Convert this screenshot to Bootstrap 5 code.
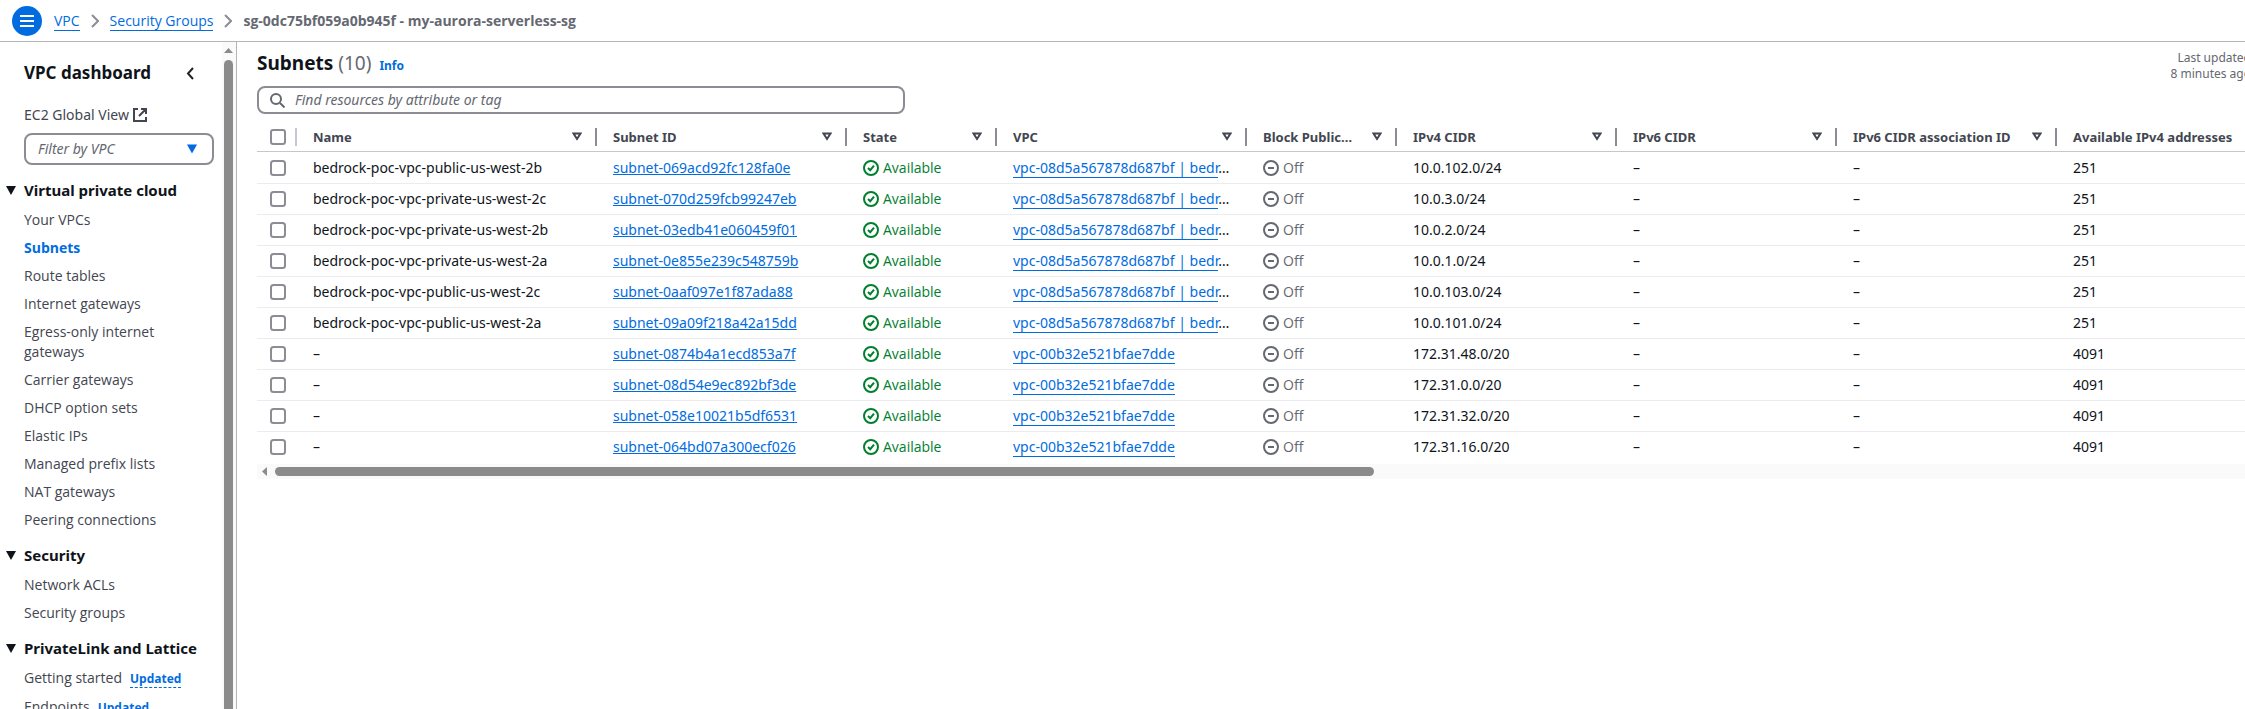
<!DOCTYPE html>
<html lang="en">
<head>
<meta charset="utf-8">
<meta name="viewport" content="width=device-width, initial-scale=1">
<title>Subnets | VPC dashboard</title>
<link href="https://cdn.jsdelivr.net/npm/bootstrap@5.3.0/dist/css/bootstrap.min.css" rel="stylesheet">
<style>
  :root { --ink: #0f141a; --muted: #656871; --body: #424650; --blue: #006ce0; --line: #8c8c94; }
  body { font-family: "Noto Sans", "Open Sans", sans-serif; font-size: 14px; line-height: 20px; color: var(--ink); background: #fff; }
  svg { flex: none; fill: none; stroke: currentColor; stroke-width: 2; }
  .solid { fill: currentColor; stroke: none; }
  a { color: var(--blue); }
  .shell { height: 100vh; }
  .topbar { height: 42px; border-bottom: 1px solid #b4b4bb; padding-left: 12px; }
  .menu-btn { width: 30px; height: 30px; background: var(--blue); color: #fff; }
  .crumbs { font-family: "Open Sans", "Noto Sans", sans-serif; gap: 11px; margin-left: 12px; color: var(--line); }
  .crumbs a, .vpc-link { text-decoration: none; border-bottom: 1px solid var(--blue); }
  .crumbs .here { color: var(--muted); font-weight: 700; }
  .side { width: 237px; border-right: 1px solid #b4b4bb; }
  .side-body { min-width: 0; padding: 19px 8px 0 24px; }
  .side h1 { font-size: 17px; line-height: 24px; font-weight: 700; }
  .side .collapse-btn { margin-right: 20px; }
  .side h2 { font-size: 15px; line-height: 20px; font-weight: 700; margin: 0 0 10px -18px; gap: 8px; }
  .side a { color: var(--body); text-decoration: none; }
  .side .current { color: var(--blue); font-weight: 700; }
  .side ul { font-family: "Open Sans", "Noto Sans", sans-serif; gap: 8px; margin-bottom: 15px; }
  .side li { padding-right: 40px; }
  .side .tagged { padding: 0; white-space: nowrap; }
  .side .updated { color: var(--blue); font-size: 12px; font-weight: 700; border-bottom: 1px dashed var(--blue); margin-left: 8px; }
  .vpc-filter { height: 32px; border: 2px solid var(--line); border-radius: 8px; font-size: 14px; font-style: italic; color: var(--muted); padding: 0 12px; appearance: none; background: #fff; }
  .filter-wrap { margin: 8px 0 15px; width: 190px; }
  .filter-wrap svg { right: 17px; top: 11px; color: var(--blue); pointer-events: none; }
  .vbar { flex: none; width: 14px; background: #fafafa; color: #8b8b8b; padding: 6px 2px 0 0; gap: 7px; }
  .vbar .thumb { width: 9px; background: #8b8b8b; border-radius: 5px 5px 0 0; }
  .content { padding: 8px 0 0 20px; min-width: 0; }
  .content h2 { font-size: 19px; line-height: 26px; font-weight: 700; }
  .content .count { color: var(--muted); font-weight: 400; }
  .info { font-size: 12px; font-weight: 700; text-decoration: none; margin-left: 8px; }
  .stamp { font-size: 12px; line-height: 16px; color: var(--muted); margin-right: -6px; }
  .finder { width: 648px; height: 28px; border: 2px solid var(--line); border-radius: 8px; padding: 0 11px; gap: 10px; color: var(--muted); }
  .finder input { font-style: italic; line-height: 20px; color: var(--muted); }
  .finder input::placeholder { color: var(--muted); opacity: 1; }
  .grid-wrap { margin: 8px 0 1px; }
  .subnets { table-layout: fixed; width: 2020px; border-collapse: separate; border-spacing: 0; margin: 0; }
  .subnets th, .subnets td { padding: 0 16px; height: 31px; white-space: nowrap; vertical-align: middle; border-bottom: 1px solid #ebebf0; }
  .subnets th { height: 30px; font-size: 13px; color: var(--body); font-weight: 700; border-bottom-color: #c6c6cd; }
  .subnets tr:first-child td { height: 32px; }
  .subnets tr:last-child td { border-bottom-color: transparent; }
  .subnets td:first-child, .subnets th:first-child { padding: 0 0 0 13px; }
  .subnets .head { height: 18px; border-right: 2px solid var(--line); margin: 0 -16px 0 0; padding-right: 13px; }
  .subnets .head.light { border-color: #c6c6cd; margin: 0; padding: 0; }
  .subnets .head.last { border: 0; }
  .subnets input { flex: none; width: 16px; height: 16px; margin: 0; border: 2px solid var(--line); border-radius: 3px; }
  .status { gap: 4px; font-family: "Open Sans", "Noto Sans", sans-serif; }
  .ok { color: #00802f; }
  .off { color: var(--muted); }
  .hbar { height: 15px; background: #fafafa; color: #8b8b8b; padding-left: 5px; gap: 8px; }
  .hbar .thumb { width: 55.4%; height: 9px; border-radius: 5px; background: #8b8b8b; }
</style>
</head>
<body>
<svg width="0" height="0" class="position-absolute" aria-hidden="true">
  <symbol id="ok" viewBox="0 0 16 16"><circle cx="8" cy="8" r="7"/><path d="M5 8l2.200 2.200L11 5.600"/></symbol>
  <symbol id="off" viewBox="0 0 16 16"><circle cx="8" cy="8" r="7"/><path d="M5 8h6"/></symbol>
  <symbol id="sort" viewBox="0 0 10 9"><path d="M1.500 1.500h7L5 7z"/></symbol>
  <symbol id="chev" viewBox="0 0 8 14"><path d="M1 1l6 6-6 6"/></symbol>
  <symbol id="tri" viewBox="0 0 10 9"><path d="M0 0h10L5 9z" fill="currentColor" stroke="none"/></symbol>
</svg>
<div class="shell d-flex flex-column overflow-hidden">
  <header class="topbar d-flex align-items-center flex-shrink-0">
    <button type="button" class="menu-btn btn rounded-circle p-0 border-0 d-flex align-items-center justify-content-center" aria-label="Menu"><svg width="14" height="12" viewBox="0 0 14 12"><path d="M0 1h14M0 6h14M0 11h14"/></svg></button>
    <nav aria-label="Breadcrumb">
      <ol class="crumbs list-unstyled d-flex align-items-center mb-0">
        <li><a href="#">VPC</a></li>
        <li class="d-flex"><svg width="8" height="14"><use href="#chev"/></svg></li>
        <li><a href="#">Security Groups</a></li>
        <li class="d-flex"><svg width="8" height="14"><use href="#chev"/></svg></li>
        <li class="here">sg-0dc75bf059a0b945f - my-aurora-serverless-sg</li>
      </ol>
    </nav>
  </header>
  <div class="d-flex flex-grow-1 overflow-hidden">
    <aside class="side d-flex flex-shrink-0">
      <div class="side-body flex-grow-1">
        <div class="d-flex justify-content-between align-items-center mb-3 pb-1">
          <h1 class="mb-0">VPC dashboard</h1>
          <button type="button" class="collapse-btn btn p-0 border-0 d-flex" aria-label="Collapse"><svg width="8" height="13" viewBox="0 0 8 13"><path d="M7 1L2 6.500l5 5.500"/></svg></button>
        </div>
        <a href="#" class="d-flex align-items-center gap-1">EC2 Global View <svg width="14" height="14" viewBox="0 0 14 14"><path d="M5 1H1v12h12V9M8 1h5v5M13 1L6 8"/></svg></a>
        <div class="filter-wrap position-relative">
          <select class="vpc-filter w-100" aria-label="Filter by VPC"><option>Filter by VPC</option></select>
          <svg class="position-absolute" width="10" height="10"><use href="#tri"/></svg>
        </div>
        <h2 class="d-flex align-items-center"><svg width="10" height="9"><use href="#tri"/></svg>Virtual private cloud</h2>
        <ul class="list-unstyled d-flex flex-column">
          <li><a href="#">Your VPCs</a></li>
          <li><a href="#" class="current">Subnets</a></li>
          <li><a href="#">Route tables</a></li>
          <li><a href="#">Internet gateways</a></li>
          <li><a href="#">Egress-only internet gateways</a></li>
          <li><a href="#">Carrier gateways</a></li>
          <li><a href="#">DHCP option sets</a></li>
          <li><a href="#">Elastic IPs</a></li>
          <li><a href="#">Managed prefix lists</a></li>
          <li><a href="#">NAT gateways</a></li>
          <li><a href="#">Peering connections</a></li>
        </ul>
        <h2 class="d-flex align-items-center"><svg width="10" height="9"><use href="#tri"/></svg>Security</h2>
        <ul class="list-unstyled d-flex flex-column">
          <li><a href="#">Network ACLs</a></li>
          <li><a href="#">Security groups</a></li>
        </ul>
        <h2 class="d-flex align-items-center"><svg width="10" height="9"><use href="#tri"/></svg>PrivateLink and Lattice</h2>
        <ul class="list-unstyled d-flex flex-column">
          <li class="tagged"><a href="#">Getting started</a><a href="#" class="updated">Updated</a></li>
          <li class="tagged"><a href="#">Endpoints</a><a href="#" class="updated">Updated</a></li>
        </ul>
      </div>
      <div class="vbar d-flex flex-column align-items-center" aria-hidden="true">
        <svg width="9" height="5" viewBox="0 0 9 5"><path class="solid" d="M0 5L4.500 0 9 5z"/></svg>
        <div class="thumb flex-grow-1"></div>
      </div>
    </aside>
    <main class="content flex-grow-1 overflow-hidden">
      <div class="d-flex justify-content-between">
        <div class="d-flex align-items-baseline">
          <h2 class="mb-0">Subnets <span class="count">(10)</span></h2>
          <a href="#" class="info">Info</a>
        </div>
        <div class="stamp text-end">Last updated<br>8 minutes ago</div>
      </div>
      <label class="finder d-flex align-items-center mt-1">
        <svg width="15" height="15" viewBox="0 0 15 15"><circle cx="6" cy="6" r="5"/><path d="M10 10l4.500 4.500"/></svg>
        <input type="search" class="border-0 p-0 flex-grow-1 bg-transparent" placeholder="Find resources by attribute or tag" aria-label="Find resources">
      </label>
      <div class="grid-wrap overflow-hidden">
        <table class="subnets">
          <colgroup><col style="width:40px"><col style="width:300px"><col style="width:250px"><col style="width:150px"><col style="width:250px"><col style="width:150px"><col style="width:220px"><col style="width:220px"><col style="width:220px"><col></colgroup>
          <thead><tr>
            <th><div class="head light d-flex align-items-center"><input class="form-check-input" type="checkbox" aria-label="Select all"></div></th>
            <th><div class="head d-flex align-items-center justify-content-between">Name<svg width="10" height="9"><use href="#sort"/></svg></div></th>
            <th><div class="head d-flex align-items-center justify-content-between">Subnet ID<svg width="10" height="9"><use href="#sort"/></svg></div></th>
            <th><div class="head d-flex align-items-center justify-content-between">State<svg width="10" height="9"><use href="#sort"/></svg></div></th>
            <th><div class="head d-flex align-items-center justify-content-between">VPC<svg width="10" height="9"><use href="#sort"/></svg></div></th>
            <th><div class="head d-flex align-items-center justify-content-between">Block Public…<svg width="10" height="9"><use href="#sort"/></svg></div></th>
            <th><div class="head d-flex align-items-center justify-content-between">IPv4 CIDR<svg width="10" height="9"><use href="#sort"/></svg></div></th>
            <th><div class="head d-flex align-items-center justify-content-between">IPv6 CIDR<svg width="10" height="9"><use href="#sort"/></svg></div></th>
            <th><div class="head d-flex align-items-center justify-content-between">IPv6 CIDR association ID<svg width="10" height="9"><use href="#sort"/></svg></div></th>
            <th><div class="head last d-flex align-items-center">Available IPv4 addresses</div></th>
          </tr></thead>
          <tbody>
            <tr><td><input class="form-check-input d-block" type="checkbox" aria-label="Select row"></td><td>bedrock-poc-vpc-public-us-west-2b</td><td><a href="#">subnet-069acd92fc128fa0e</a></td><td><span class="status ok d-flex align-items-center"><svg width="16" height="16"><use href="#ok"/></svg>Available</span></td><td><a href="#" class="vpc-link">vpc-08d5a567878d687bf | bedr</a>…</td><td><span class="status off d-flex align-items-center"><svg width="16" height="16"><use href="#off"/></svg>Off</span></td><td>10.0.102.0/24</td><td>–</td><td>–</td><td>251</td></tr>
            <tr><td><input class="form-check-input d-block" type="checkbox" aria-label="Select row"></td><td>bedrock-poc-vpc-private-us-west-2c</td><td><a href="#">subnet-070d259fcb99247eb</a></td><td><span class="status ok d-flex align-items-center"><svg width="16" height="16"><use href="#ok"/></svg>Available</span></td><td><a href="#" class="vpc-link">vpc-08d5a567878d687bf | bedr</a>…</td><td><span class="status off d-flex align-items-center"><svg width="16" height="16"><use href="#off"/></svg>Off</span></td><td>10.0.3.0/24</td><td>–</td><td>–</td><td>251</td></tr>
            <tr><td><input class="form-check-input d-block" type="checkbox" aria-label="Select row"></td><td>bedrock-poc-vpc-private-us-west-2b</td><td><a href="#">subnet-03edb41e060459f01</a></td><td><span class="status ok d-flex align-items-center"><svg width="16" height="16"><use href="#ok"/></svg>Available</span></td><td><a href="#" class="vpc-link">vpc-08d5a567878d687bf | bedr</a>…</td><td><span class="status off d-flex align-items-center"><svg width="16" height="16"><use href="#off"/></svg>Off</span></td><td>10.0.2.0/24</td><td>–</td><td>–</td><td>251</td></tr>
            <tr><td><input class="form-check-input d-block" type="checkbox" aria-label="Select row"></td><td>bedrock-poc-vpc-private-us-west-2a</td><td><a href="#">subnet-0e855e239c548759b</a></td><td><span class="status ok d-flex align-items-center"><svg width="16" height="16"><use href="#ok"/></svg>Available</span></td><td><a href="#" class="vpc-link">vpc-08d5a567878d687bf | bedr</a>…</td><td><span class="status off d-flex align-items-center"><svg width="16" height="16"><use href="#off"/></svg>Off</span></td><td>10.0.1.0/24</td><td>–</td><td>–</td><td>251</td></tr>
            <tr><td><input class="form-check-input d-block" type="checkbox" aria-label="Select row"></td><td>bedrock-poc-vpc-public-us-west-2c</td><td><a href="#">subnet-0aaf097e1f87ada88</a></td><td><span class="status ok d-flex align-items-center"><svg width="16" height="16"><use href="#ok"/></svg>Available</span></td><td><a href="#" class="vpc-link">vpc-08d5a567878d687bf | bedr</a>…</td><td><span class="status off d-flex align-items-center"><svg width="16" height="16"><use href="#off"/></svg>Off</span></td><td>10.0.103.0/24</td><td>–</td><td>–</td><td>251</td></tr>
            <tr><td><input class="form-check-input d-block" type="checkbox" aria-label="Select row"></td><td>bedrock-poc-vpc-public-us-west-2a</td><td><a href="#">subnet-09a09f218a42a15dd</a></td><td><span class="status ok d-flex align-items-center"><svg width="16" height="16"><use href="#ok"/></svg>Available</span></td><td><a href="#" class="vpc-link">vpc-08d5a567878d687bf | bedr</a>…</td><td><span class="status off d-flex align-items-center"><svg width="16" height="16"><use href="#off"/></svg>Off</span></td><td>10.0.101.0/24</td><td>–</td><td>–</td><td>251</td></tr>
            <tr><td><input class="form-check-input d-block" type="checkbox" aria-label="Select row"></td><td>–</td><td><a href="#">subnet-0874b4a1ecd853a7f</a></td><td><span class="status ok d-flex align-items-center"><svg width="16" height="16"><use href="#ok"/></svg>Available</span></td><td><a href="#" class="vpc-link">vpc-00b32e521bfae7dde</a></td><td><span class="status off d-flex align-items-center"><svg width="16" height="16"><use href="#off"/></svg>Off</span></td><td>172.31.48.0/20</td><td>–</td><td>–</td><td>4091</td></tr>
            <tr><td><input class="form-check-input d-block" type="checkbox" aria-label="Select row"></td><td>–</td><td><a href="#">subnet-08d54e9ec892bf3de</a></td><td><span class="status ok d-flex align-items-center"><svg width="16" height="16"><use href="#ok"/></svg>Available</span></td><td><a href="#" class="vpc-link">vpc-00b32e521bfae7dde</a></td><td><span class="status off d-flex align-items-center"><svg width="16" height="16"><use href="#off"/></svg>Off</span></td><td>172.31.0.0/20</td><td>–</td><td>–</td><td>4091</td></tr>
            <tr><td><input class="form-check-input d-block" type="checkbox" aria-label="Select row"></td><td>–</td><td><a href="#">subnet-058e10021b5df6531</a></td><td><span class="status ok d-flex align-items-center"><svg width="16" height="16"><use href="#ok"/></svg>Available</span></td><td><a href="#" class="vpc-link">vpc-00b32e521bfae7dde</a></td><td><span class="status off d-flex align-items-center"><svg width="16" height="16"><use href="#off"/></svg>Off</span></td><td>172.31.32.0/20</td><td>–</td><td>–</td><td>4091</td></tr>
            <tr><td><input class="form-check-input d-block" type="checkbox" aria-label="Select row"></td><td>–</td><td><a href="#">subnet-064bd07a300ecf026</a></td><td><span class="status ok d-flex align-items-center"><svg width="16" height="16"><use href="#ok"/></svg>Available</span></td><td><a href="#" class="vpc-link">vpc-00b32e521bfae7dde</a></td><td><span class="status off d-flex align-items-center"><svg width="16" height="16"><use href="#off"/></svg>Off</span></td><td>172.31.16.0/20</td><td>–</td><td>–</td><td>4091</td></tr>
          </tbody>
        </table>
      </div>
      <div class="hbar d-flex align-items-center" aria-hidden="true"><svg width="5" height="9" viewBox="0 0 5 9"><path class="solid" d="M5 0v9L0 4.500z"/></svg><div class="thumb"></div></div>
    </main>
  </div>
</div>
<script src="https://cdn.jsdelivr.net/npm/bootstrap@5.3.0/dist/js/bootstrap.bundle.min.js"></script>
</body>
</html>
